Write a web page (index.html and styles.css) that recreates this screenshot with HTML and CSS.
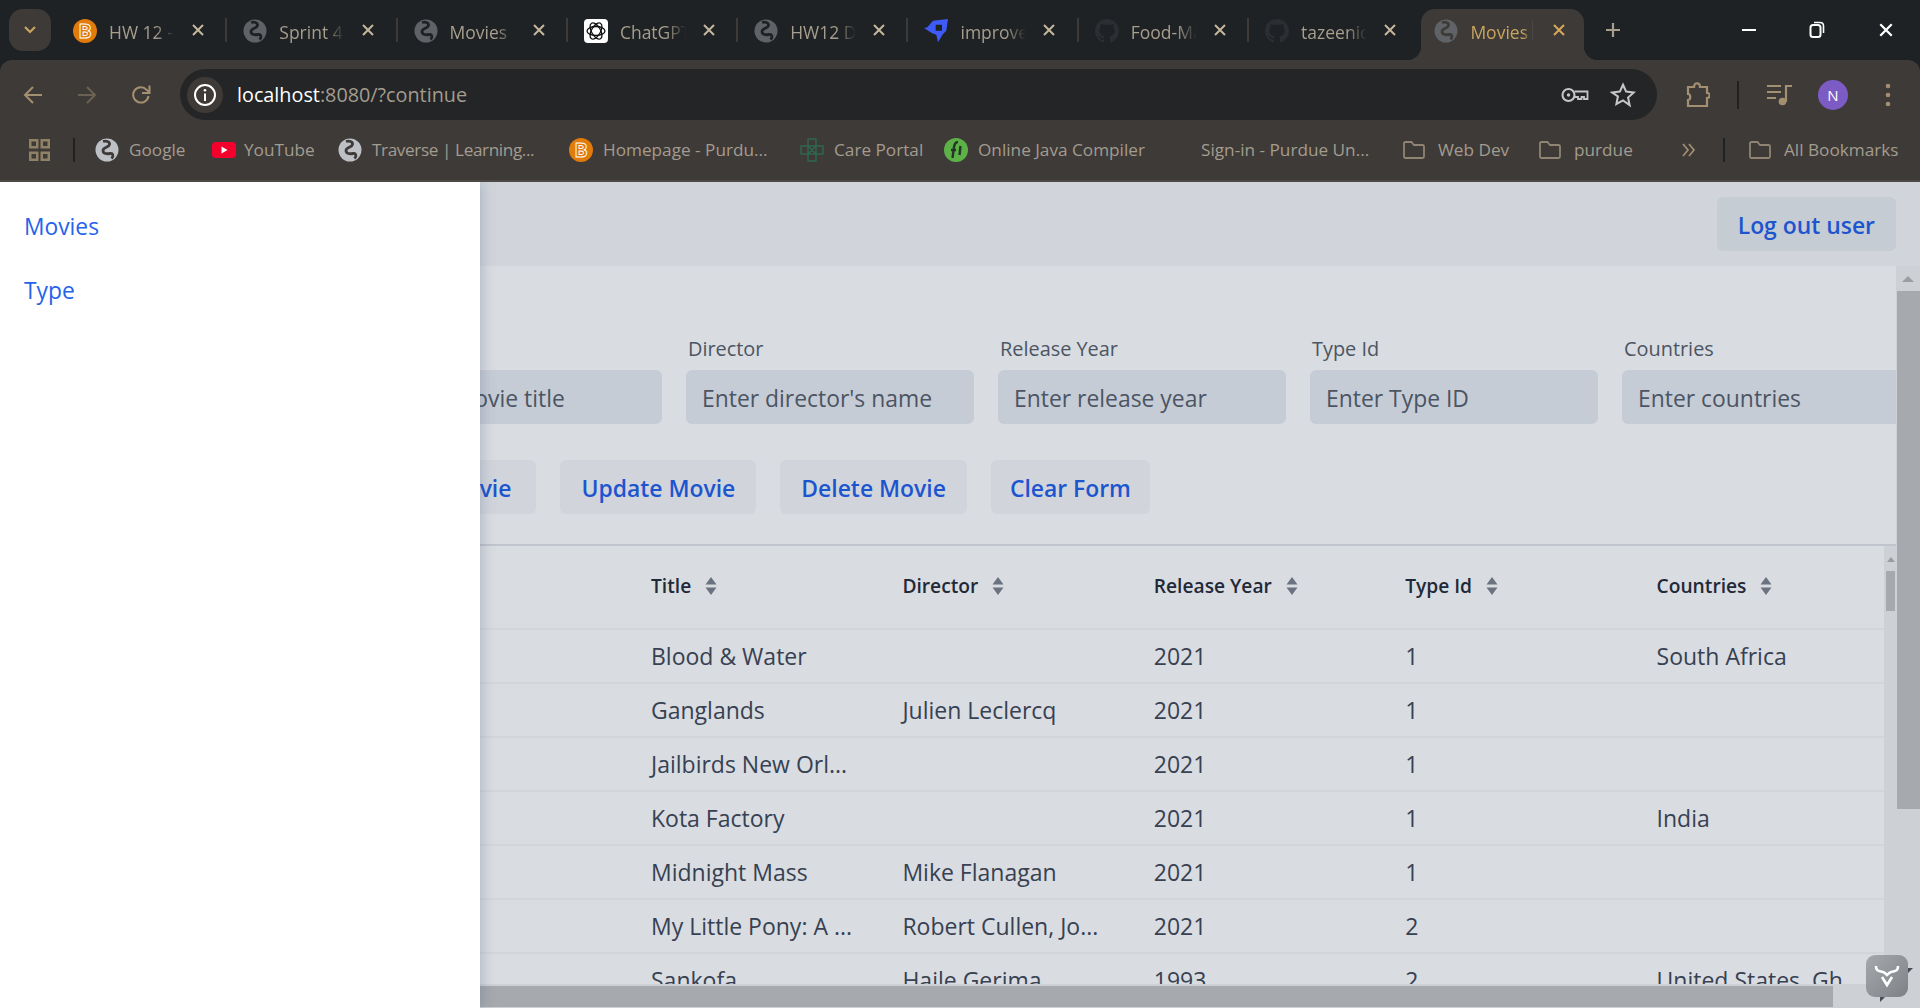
FILE: index.html
```html
<!DOCTYPE html>
<html>
<head>
<meta charset="UTF-8">
<title>Movies</title>
<link rel="stylesheet" href="styles.css">
</head>
<body>
	<svg class="sprite" width="0" height="0">
		<symbol id="globe" viewBox="0 0 24 24">
			<circle cx="12" cy="12" r="11.5" fill="currentColor"/>
			<path d="M8 3.500C11 2.500 15 3.500 14.500 6.500S8 9 8 12.500s4 3.500 7 3 4 2.500 1.500 5" fill="none" stroke="var(--hole)" stroke-width="2.800"/>
		</symbol>
		<symbol id="bright" viewBox="0 0 24 24">
			<ellipse cx="12" cy="12" rx="12" ry="12" fill="#e07b0c"/>
			<text x="12" y="19" text-anchor="middle" class="bright-b">B</text>
		</symbol>
		<symbol id="github" viewBox="0 0 16 16">
			<path fill="#2b2f34" d="M8 0C3.580 0 0 3.580 0 8c0 3.540 2.290 6.530 5.470 7.590.4.070.55-.17.55-.38 0-.19-.01-.82-.01-1.490-2.010.37-2.530-.49-2.690-.94-.09-.23-.48-.94-.82-1.130-.28-.15-.68-.52-.01-.53.63-.01 1.080.58 1.230.82.72 1.210 1.870.87 2.330.66.070-.52.28-.87.51-1.070-1.780-.2-3.640-.89-3.640-3.950 0-.87.31-1.590.82-2.150-.08-.2-.36-1.020.08-2.120 0 0 .67-.21 2.200.82.64-.18 1.320-.27 2-.27s1.360.09 2 .27c1.530-1.040 2.200-.82 2.200-.82.44 1.100.16 1.920.08 2.120.51.56.82 1.270.82 2.150 0 3.070-1.870 3.750-3.650 3.950.29.25.54.73.54 1.480 0 1.070-.01 1.930-.01 2.200 0 .21.15.46.55.38A8.010 8.010 0 0016 8c0-4.420-3.580-8-8-8z"/>
		</symbol>
		<symbol id="folder" viewBox="0 0 24 24">
			<path d="M2 5.500C2 4.500 2.500 4 3.500 4h6l2.500 3h8.500c1 0 1.500.5 1.500 1.500v10c0 1-.5 1.500-1.500 1.500h-17C2.500 20 2 19.500 2 18.500z" fill="none" stroke="#8f8572" stroke-width="1.800"/>
		</symbol>
		<symbol id="close" viewBox="0 0 14 14">
			<path d="M2 2l10 10M12 2L2 12" fill="none" stroke="currentColor" stroke-width="2"/>
		</symbol>
		<symbol id="sort" viewBox="0 0 12 18">
			<path d="M6 0l5.500 7.500H.5zM6 18L.5 10.500h11z" fill="#6b7280"/>
		</symbol>
	</svg>

	<div class="tabstrip">
		<button class="tab-menu">
			<svg width="14" height="10" viewBox="0 0 14 10"><path d="M2 2l5 5 5-5" fill="none" stroke="#c7a55e" stroke-width="2.200"/></svg>
		</button>
		<div class="tabs">
			<div class="tab"><svg class="favicon"><use href="#bright"/></svg><span class="tab-title">HW 12 - Java</span><svg class="tab-close"><use href="#close"/></svg></div>
			<i class="tab-sep"></i>
			<div class="tab"><svg class="favicon globe"><use href="#globe"/></svg><span class="tab-title">Sprint 4 Board</span><svg class="tab-close"><use href="#close"/></svg></div>
			<i class="tab-sep"></i>
			<div class="tab"><svg class="favicon globe"><use href="#globe"/></svg><span class="tab-title">Movies | App</span><svg class="tab-close"><use href="#close"/></svg></div>
			<i class="tab-sep"></i>
			<div class="tab">
				<svg class="favicon" viewBox="0 0 24 24">
					<rect width="24" height="24" rx="4" fill="#fff"/>
					<g fill="none" stroke="#111" stroke-width="1.300">
						<ellipse cx="12" cy="12" rx="9" ry="4.500"/>
						<ellipse cx="12" cy="12" rx="9" ry="4.500" transform="rotate(60 12 12)"/>
						<ellipse cx="12" cy="12" rx="9" ry="4.500" transform="rotate(120 12 12)"/>
					</g>
				</svg>
				<span class="tab-title">ChatGPT Chat</span><svg class="tab-close"><use href="#close"/></svg>
			</div>
			<i class="tab-sep"></i>
			<div class="tab"><svg class="favicon globe"><use href="#globe"/></svg><span class="tab-title">HW12 Details</span><svg class="tab-close"><use href="#close"/></svg></div>
			<i class="tab-sep"></i>
			<div class="tab">
				<svg class="favicon" viewBox="0 0 24 24">
					<path fill-rule="evenodd" d="M9 1.700L24 0l-1.700 11.700L19 15l-5 8.300-1.700-7.600L8 14.300 0 9l3.300-.7zM11.700 5.700v6H18v-6z" fill="#3f5bf6"/>
				</svg>
				<span class="tab-title">improve writing</span><svg class="tab-close"><use href="#close"/></svg>
			</div>
			<i class="tab-sep"></i>
			<div class="tab"><svg class="favicon"><use href="#github"/></svg><span class="tab-title">Food-Manager</span><svg class="tab-close"><use href="#close"/></svg></div>
			<i class="tab-sep"></i>
			<div class="tab"><svg class="favicon"><use href="#github"/></svg><span class="tab-title">tazeenict repo</span><svg class="tab-close"><use href="#close"/></svg></div>
			<div class="tab tab-active"><svg class="favicon globe"><use href="#globe"/></svg><span class="tab-title">Movies</span><i class="tab-inner-sep"></i><svg class="tab-close"><use href="#close"/></svg></div>
		</div>
		<svg class="new-tab" width="20" height="20" viewBox="0 0 20 20"><path d="M10 3v14M3 10h14" stroke="#a79e8e" stroke-width="2.200"/></svg>
		<div class="window-controls">
			<svg width="14" height="14" viewBox="0 0 14 14"><path d="M0 7h14" stroke="#fff" stroke-width="2"/></svg>
			<svg width="16" height="18" viewBox="0 0 16 18"><rect x="1.500" y="4" width="10" height="12" rx="2.500" fill="none" stroke="#fff" stroke-width="2"/><path d="M5 1.500h6c2 0 3.500 1 3.500 3.500v7" fill="none" stroke="#fff" stroke-width="1.600"/></svg>
			<svg width="16" height="16" viewBox="0 0 14 14"><use href="#close" class="win-close"/></svg>
		</div>
	</div>

	<div class="chrome">
		<div class="toolbar">
			<div class="nav-btn">
				<svg width="22" height="22" viewBox="0 0 22 22"><path d="M20 11H3M11 3l-8 8 8 8" fill="none" stroke="#a39070" stroke-width="2"/></svg>
			</div>
			<div class="nav-btn">
				<svg width="22" height="22" viewBox="0 0 22 22"><path d="M2 11h17M11 3l8 8-8 8" fill="none" stroke="#6b6150" stroke-width="2"/></svg>
			</div>
			<div class="nav-btn">
				<svg width="22" height="22" viewBox="0 0 22 22"><path d="M18.500 12a7.700 7.700 0 1 1-1.800-6.200L19 8" fill="none" stroke="#a39070" stroke-width="2"/><path d="M19.500 1.500V9H12" fill="none" stroke="#a39070" stroke-width="2"/></svg>
			</div>
			<div class="address">
				<span class="info-chip">
					<svg width="24" height="24" viewBox="0 0 24 24"><circle cx="12" cy="12" r="10" fill="none" stroke="#fff" stroke-width="2"/><path d="M12 10.500V18" stroke="#fff" stroke-width="2"/><circle cx="12" cy="7.300" r="1.300" fill="#fff"/></svg>
				</span>
				<span class="url"><b>localhost</b>:8080/?continue</span>
				<svg class="key" width="28" height="18" viewBox="0 0 28 18"><circle cx="7.500" cy="9" r="6" fill="none" stroke="#c4c7c5" stroke-width="2.100"/><circle cx="7.500" cy="9" r="1.700" fill="#c4c7c5"/><path d="M13.500 5.500H26.500V13H23V11h-2.500v2H17v-2h-3.500" fill="none" stroke="#c4c7c5" stroke-width="1.800"/></svg>
				<svg class="star" width="26" height="26" viewBox="0 0 24 24"><path d="M12 2.500l2.900 6.400 7 .8-5.200 4.700 1.400 6.900L12 17l-6.100 3.300 1.400-6.900L2.100 9.700l7-.8z" fill="none" stroke="#c4c7c5" stroke-width="1.900"/></svg>
			</div>
			<svg class="ext" width="24" height="26" viewBox="0 0 24 26"><path d="M2 5h6c0-5 6-5 6 0h7v6c3.500 0 3.500 5 0 5v8H2v-6c3 0 3-6 0-6z" fill="none" stroke="#a39070" stroke-width="2.200"/></svg>
			<i class="toolbar-sep"></i>
			<svg class="media" width="26" height="24" viewBox="0 0 26 24"><path d="M0 3h14M0 9h14M0 15h9" stroke="#a39070" stroke-width="2.200"/><path d="M19 19V3h6" fill="none" stroke="#a39070" stroke-width="2.200"/><circle cx="15.500" cy="18.500" r="3.800" fill="#a39070"/></svg>
			<span class="avatar">N</span>
			<svg class="dots" width="6" height="24" viewBox="0 0 6 24"><circle cx="3" cy="3" r="2.300" fill="#a39070"/><circle cx="3" cy="12" r="2.300" fill="#a39070"/><circle cx="3" cy="21" r="2.300" fill="#a39070"/></svg>
		</div>
		<div class="bookmarks">
			<svg width="21" height="22" viewBox="0 0 21 22"><g fill="none" stroke="#8f8166" stroke-width="2.500"><rect x="1.250" y="1.250" width="7" height="7"/><rect x="12.750" y="1.250" width="7" height="7"/><rect x="1.250" y="13.750" width="7" height="7"/><rect x="12.750" y="13.750" width="7" height="7"/></g></svg>
			<i class="bm-sep"></i>
			<span class="bm"><svg class="favicon globe"><use href="#globe"/></svg>Google</span>
			<span class="bm bm-yt">
				<svg class="favicon" viewBox="0 0 24 24"><rect y="4" width="24" height="16" rx="3.500" fill="#f4002c"/><path d="M9.500 8.500l6 3.500-6 3.500z" fill="#fff"/></svg>YouTube
			</span>
			<span class="bm bm-tight"><svg class="favicon globe"><use href="#globe"/></svg>Traverse | Learning...</span>
			<span class="bm"><svg class="favicon"><use href="#bright"/></svg>Homepage - Purdu...</span>
			<span class="bm">
				<svg class="favicon" viewBox="0 0 24 24"><path d="M8 1h8v7h7v8h-7v7H8v-7H1V8h7zM8 8l8 8M16 8l-8 8M8 8v8M16 8v8M8 8h8M8 16h8" fill="none" stroke="#2f6650" stroke-width="1.500"/></svg>Care Portal
			</span>
			<span class="bm">
				<svg class="favicon" viewBox="0 0 24 24"><circle cx="12" cy="12" r="12" fill="#5cb246"/><path d="M7 12h5M14 4c-3 0-3.500 2-4 5l-1.500 11M16.500 8l-1 9" fill="none" stroke="#26352a" stroke-width="2.400"/></svg>Online Java Compiler
			</span>
			<span class="bm"><i class="favicon"></i>Sign-in - Purdue Un...</span>
			<span class="bm bm-folder"><svg class="favicon"><use href="#folder"/></svg>Web Dev</span>
			<span class="bm bm-folder"><svg class="favicon"><use href="#folder"/></svg>purdue</span>
			<svg width="24" height="20" viewBox="0 0 24 20"><path d="M7 4l5 6-5 6M13 4l5 6-5 6" fill="none" stroke="#a39070" stroke-width="1.700"/></svg>
			<i class="bm-sep"></i>
			<span class="bm bm-folder"><svg class="favicon"><use href="#folder"/></svg>All Bookmarks</span>
		</div>
	</div>

	<div class="viewport">
		<nav class="sidebar">
			<a href="#">Movies</a>
			<a href="#">Type</a>
		</nav>

		<header class="topbar">
			<button class="btn btn-logout">Log out user</button>
		</header>

		<div class="page">
			<div class="page-content">
				<form class="movie-form">
					<div class="fields">
						<div class="field"><label>Movie Title</label><input type="text" placeholder="Enter movie title"></div>
						<div class="field"><label>Director</label><input type="text" placeholder="Enter director's name"></div>
						<div class="field"><label>Release Year</label><input type="text" placeholder="Enter release year"></div>
						<div class="field"><label>Type Id</label><input type="text" placeholder="Enter Type ID"></div>
						<div class="field"><label>Countries</label><input type="text" placeholder="Enter countries"></div>
					</div>
					<div class="actions">
						<button type="button" class="btn btn-add">Add Movie</button>
						<button type="button" class="btn">Update Movie</button>
						<button type="button" class="btn">Delete Movie</button>
						<button type="button" class="btn btn-clear">Clear Form</button>
					</div>
				</form>

				<div class="grid-area">
					<div class="grid-scroll">
						<table class="movies">
							<thead>
								<tr>
									<th></th>
									<th><span class="th-inner">Title<svg class="sort"><use href="#sort"/></svg></span></th>
									<th><span class="th-inner">Director<svg class="sort"><use href="#sort"/></svg></span></th>
									<th><span class="th-inner">Release Year<svg class="sort"><use href="#sort"/></svg></span></th>
									<th><span class="th-inner">Type Id<svg class="sort"><use href="#sort"/></svg></span></th>
									<th><span class="th-inner">Countries<svg class="sort"><use href="#sort"/></svg></span></th>
								</tr>
							</thead>
							<tbody>
								<tr><td></td><td>Blood &amp; Water</td><td></td><td>2021</td><td>1</td><td>South Africa</td></tr>
								<tr><td></td><td>Ganglands</td><td>Julien Leclercq</td><td>2021</td><td>1</td><td></td></tr>
								<tr><td></td><td>Jailbirds New Orl...</td><td></td><td>2021</td><td>1</td><td></td></tr>
								<tr><td></td><td>Kota Factory</td><td></td><td>2021</td><td>1</td><td>India</td></tr>
								<tr><td></td><td>Midnight Mass</td><td>Mike Flanagan</td><td>2021</td><td>1</td><td></td></tr>
								<tr><td></td><td>My Little Pony: A ...</td><td>Robert Cullen, Jo...</td><td>2021</td><td>2</td><td></td></tr>
								<tr><td></td><td>Sankofa</td><td>Haile Gerima</td><td>1993</td><td>2</td><td>United States, Gh...</td></tr>
							</tbody>
						</table>
					</div>
					<div class="grid-vbar">
						<i class="arrow-up-small"></i>
						<i class="grid-vthumb"></i>
					</div>
				</div>

				<div class="hbar"><i class="hthumb"></i></div>
			</div>

			<div class="vbar">
				<i class="arrow-up"></i>
				<i class="vthumb"></i>
			</div>
		</div>

		<svg class="dev-badge" width="48" height="48" viewBox="0 0 48 48">
			<defs>
				<linearGradient id="badgeFill" x1="0" y1="0" x2="1" y2="1">
					<stop offset="0" stop-color="#a5a8ac"/>
					<stop offset="1" stop-color="#7e8287"/>
				</linearGradient>
			</defs>
			<path d="M42 18l5-5h-5zM14 47l5-5h-5z" fill="#4a4e54"/>
			<rect width="42" height="42" rx="9" fill="url(#badgeFill)"/>
			<path d="M10 11c0 4 1 5 7 6 2 .5 3 2 4 3 1-1 2-2.500 4-3 6-1 7-2 7-6" fill="none" stroke="#fff" stroke-width="2.600"/>
			<path d="M16 22l5 8 5-8" fill="none" stroke="#fff" stroke-width="2.600"/>
		</svg>
	</div>
</body>
</html>
```

FILE: styles.css
```css
* {
	box-sizing: border-box;
}

html, body {
	margin: 0;
	height: 100%;
	overflow: hidden;
}

body {
	display: flex;
	flex-direction: column;
	height: 1008px;
	background-color: #1e2224;
	font-family: "Open Sans", "Noto Sans", sans-serif;
	--hole: #1e2224;
}

.sprite {
	position: absolute;
}

i {
	display: block;
}

/* tab strip */

.tabstrip {
	display: flex;
	align-items: flex-start;
	flex: none;
	height: 60px;
	padding-left: 9px;
	background-color: #1e2224;
}

.tab-menu {
	display: flex;
	align-items: center;
	justify-content: center;
	width: 42px;
	height: 42px;
	margin-top: 9px;
	padding: 0;
	border: none;
	border-radius: 14px;
	background-color: #3e3a38;
}

.tabs {
	display: flex;
	align-items: center;
	height: 51px;
	margin-top: 9px;
	margin-left: 9px;
}

.tab {
	display: flex;
	align-items: center;
	flex: none;
	width: 162.3px;
	height: 51px;
	padding-left: 13px;
	color: #a79e8e;
	font-size: 17.5px;
}

.favicon {
	flex: none;
	width: 24px;
	height: 24px;
}

.tab .favicon {
	margin-top: -8px;
}

.favicon.globe {
	color: #5f6368;
}

.tab-title {
	flex: none;
	width: 66px;
	margin-top: -6px;
	margin-left: 12px;
	overflow: hidden;
	white-space: nowrap;
	-webkit-mask-image: linear-gradient(to right, #000 70%, transparent 100%);
	mask-image: linear-gradient(to right, #000 70%, transparent 100%);
}

.tab-close {
	flex: none;
	width: 14px;
	height: 14px;
	margin-top: -9px;
	margin-left: 16px;
	color: #c5b79d;
}

.tab-sep {
	flex: none;
	width: 2px;
	height: 24px;
	margin: -9px 3px 0;
	background-color: #3e3a38;
}

.tab-active {
	position: relative;
	margin-left: 7px;
	border-radius: 14px 14px 0 0;
	background-color: #3e3a38;
	color: #c7a55e;
	--hole: #3e3a38;
}

.tab-active .tab-close {
	margin-left: 19px;
	color: #d6a95a;
}

.tab-active .tab-title {
	width: 62px;
	-webkit-mask-image: linear-gradient(to right, #000 85%, transparent 100%);
	mask-image: linear-gradient(to right, #000 85%, transparent 100%);
}

.tab-inner-sep {
	flex: none;
	width: 1px;
	height: 20px;
	margin-top: -9px;
	background-color: #4a4642;
}

.tab-active::before,
.tab-active::after {
	content: "";
	position: absolute;
	bottom: 0;
	width: 14px;
	height: 14px;
}

.tab-active::before {
	left: -14px;
	background: radial-gradient(circle at 0 0, transparent 14px, #3e3a38 14.5px);
}

.tab-active::after {
	right: -14px;
	background: radial-gradient(circle at 100% 0, transparent 14px, #3e3a38 14.5px);
}

.new-tab {
	flex: none;
	margin-top: 20px;
	margin-left: 19px;
}

.window-controls {
	display: flex;
	align-items: center;
	justify-content: space-around;
	width: 205px;
	height: 60px;
	margin-left: auto;
}

.win-close {
	color: #fff;
}

/* toolbar and bookmarks */

.chrome {
	flex: none;
	height: 122px;
	border-bottom: 2px solid #4d4a45;
	border-radius: 12px 12px 0 0;
	background-color: #3e3a38;
}

.toolbar {
	display: flex;
	align-items: center;
	height: 60px;
	padding-top: 9px;
	padding-left: 6px;
}

.nav-btn {
	display: flex;
	align-items: center;
	justify-content: center;
	flex: none;
	width: 54px;
	height: 51px;
}

.address {
	display: flex;
	align-items: center;
	flex: none;
	width: 1477px;
	height: 51px;
	margin-left: 12px;
	padding: 0 21px 0 7px;
	border-radius: 26px;
	background-color: #232527;
}

.info-chip {
	display: flex;
	align-items: center;
	justify-content: center;
	width: 36px;
	height: 36px;
	border-radius: 50%;
	background-color: #3e3a38;
}

.url {
	margin-left: 14px;
	color: #a39c8f;
	font-size: 19.8px;
}

.url b {
	color: #fff;
	font-weight: 400;
}

.key {
	margin-left: auto;
}

.star {
	margin-left: 21px;
}

.ext {
	flex: none;
	margin-left: 29px;
}

.toolbar-sep {
	flex: none;
	width: 2px;
	height: 28px;
	margin-left: 27px;
	background-color: #1e2224;
}

.media {
	flex: none;
	margin-left: 28px;
}

.avatar {
	display: flex;
	align-items: center;
	justify-content: center;
	flex: none;
	width: 30px;
	height: 30px;
	margin-left: 25px;
	border-radius: 50%;
	background-color: #7c5cc4;
	color: #fff;
	font-size: 15px;
}

.dots {
	flex: none;
	margin-left: 37px;
}

.bookmarks {
	display: grid;
	grid-template-columns: 44px 22px 117px 126px 231px 231px 144px 223px 235px 136px 138px 47px 25px 172px;
	align-items: center;
	height: 60px;
	padding-left: 29px;
}

.bm-sep {
	width: 2px;
	height: 24px;
	background-color: #1e2224;
}

.bm {
	display: flex;
	align-items: center;
	gap: 10px;
	height: 58px;
	padding-bottom: 2px;
	color: #a39c8f;
	font-size: 17.2px;
	white-space: nowrap;
	--hole: #3e3a38;
}

.bm .favicon {
	margin-bottom: -2px;
}

.bm-yt {
	gap: 8px;
}

.bm-tight {
	letter-spacing: -0.4px;
}

.bm-folder {
	gap: 12px;
}

.bm .favicon.globe {
	color: #bdc1c6;
}

.bright-b {
	fill: none;
	stroke: #fff;
	stroke-width: 0.9px;
	font-family: "Open Sans", sans-serif;
	font-size: 20px;
	font-weight: 700;
}

/* page */

.viewport {
	position: relative;
	display: flex;
	flex-direction: column;
	flex: 1;
	min-height: 0;
	overflow: hidden;
	background-color: #d9dce1;
}

.sidebar {
	position: absolute;
	top: 0;
	bottom: 0;
	left: 0;
	z-index: 2;
	display: flex;
	flex-direction: column;
	gap: 34px;
	width: 480px;
	padding: 30px 24px;
	background-color: #fff;
	box-shadow: 0 0 14px rgba(70, 85, 120, 0.35);
}

.sidebar a {
	color: #2563eb;
	font-size: 22.8px;
	line-height: 30px;
	text-decoration: none;
}

.topbar {
	display: flex;
	align-items: center;
	justify-content: flex-end;
	flex: none;
	height: 84px;
	padding-right: 24px;
	background-color: #d1d5db;
}

.btn {
	flex: none;
	height: 54px;
	padding: 2px 21px 0;
	border: none;
	border-radius: 6px;
	background-color: #d1d5db;
	color: #1d55cf;
	font-family: inherit;
	font-size: 22.9px;
	font-weight: 600;
}

.btn-logout {
	background-color: #c6ccd4;
}

.btn-add {
	padding-right: 25px;
}

.btn-clear {
	padding: 2px 19px 0;
}

.page {
	display: flex;
	flex: 1;
	min-height: 0;
}

.page-content {
	display: flex;
	flex-direction: column;
	flex: 1;
	min-width: 0;
	overflow: hidden;
}

.movie-form {
	flex: none;
	padding: 71px 0 30px 374px;
	border-bottom: 2px solid #c0c4cc;
}

.fields {
	display: flex;
	gap: 24px;
}

.field {
	flex: none;
	width: 288px;
}

.field label {
	display: block;
	margin-bottom: 9px;
	padding-left: 2px;
	color: #4b5563;
	font-size: 19.9px;
	line-height: 24px;
}

.field input {
	display: block;
	width: 100%;
	height: 54px;
	padding: 2px 16px 0;
	border: none;
	border-radius: 6px;
	background-color: #c6ccd6;
	font-family: inherit;
	font-size: 22.9px;
}

.field input::placeholder {
	color: #4b5563;
	opacity: 1;
}

.actions {
	display: flex;
	gap: 24px;
	margin-top: 36px;
}

.grid-area {
	display: flex;
	flex: 1;
	min-height: 0;
}

.grid-scroll {
	flex: 1;
	min-width: 0;
	overflow: hidden;
}

.movies {
	width: 1884px;
	border-collapse: collapse;
	table-layout: fixed;
}

.movies th:first-child {
	width: 627px;
}

.movies th {
	height: 83px;
	padding: 0 0 3px 24px;
	border-bottom: 2px solid #d2d5da;
	color: #1f2937;
	font-size: 19.2px;
	font-weight: 600;
	text-align: left;
}

.movies td {
	height: 54px;
	padding: 0 0 0 24px;
	border-bottom: 2px solid #d2d5da;
	color: #374151;
	font-size: 23px;
	white-space: nowrap;
}

.th-inner {
	display: flex;
	align-items: center;
	gap: 14px;
}

.sort {
	flex: none;
	width: 12px;
	height: 18px;
}

.grid-vbar {
	position: relative;
	flex: none;
	width: 12px;
	background-color: #cdd0d5;
}

.arrow-up-small {
	width: 0;
	height: 0;
	margin: 11px 0 0 3px;
	border-right: 4px solid transparent;
	border-bottom: 5px solid #9a9da2;
	border-left: 4px solid transparent;
}

.grid-vthumb {
	width: 9px;
	height: 40px;
	margin-top: 9px;
	margin-left: 2px;
	background-color: #a6a9ae;
}

.hbar {
	flex: none;
	height: 24px;
	padding-top: 2px;
	background-color: #cdd0d5;
}

.hthumb {
	width: 1833px;
	height: 21px;
	background-color: #a6a9ae;
}

.vbar {
	flex: none;
	width: 24px;
	background-color: #cdd0d5;
}

.arrow-up {
	width: 0;
	height: 0;
	margin: 10px 0 0 6px;
	border-right: 6px solid transparent;
	border-bottom: 6px solid #9a9da2;
	border-left: 6px solid transparent;
}

.vthumb {
	height: 518px;
	margin-top: 9px;
	margin-left: 1px;
	background-color: #a6a9ae;
}

.dev-badge {
	position: absolute;
	right: 6px;
	bottom: 5px;
	z-index: 3;
}
```
